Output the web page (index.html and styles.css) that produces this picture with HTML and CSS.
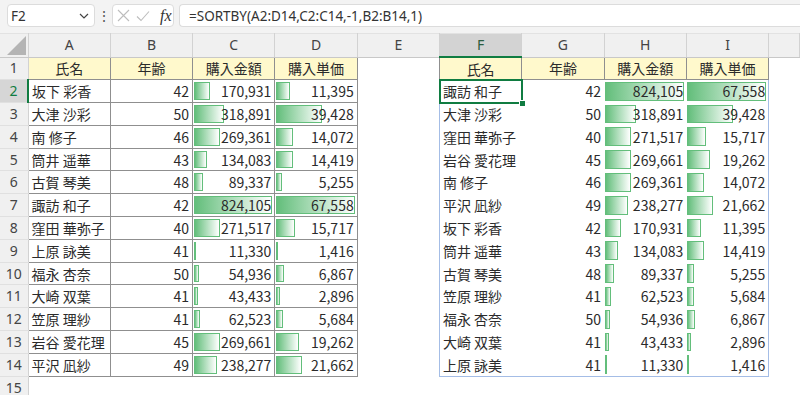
FILE: index.html
```html
<!DOCTYPE html>
<html lang="ja">

<head>
    <meta charset="UTF-8">
    <title>SORTBY</title>
    <link rel="stylesheet" href="styles.css">
</head>

<body>
    <div class="formula-bar">
        <div class="name-box">
            <span>F2</span>
            <svg class="chev" width="10" height="6" viewBox="0 0 10 6"><path d="M1 1 L5 5 L9 1" fill="none" stroke="#444" stroke-width="1.2"/></svg>
        </div>
        <div class="more">&#8942;</div>
        <div class="fx-box">
            <svg width="13" height="13" viewBox="0 0 13 13"><path d="M1 1 L12 12 M12 1 L1 12" stroke="#bdbdbd" stroke-width="1.1" fill="none"/></svg>
            <svg width="14" height="12" viewBox="0 0 14 12"><path d="M1 6.5 L5 10.5 L13 1.5" stroke="#bdbdbd" stroke-width="1.1" fill="none"/></svg>
            <span class="fx">fx</span>
        </div>
        <div class="formula">=SORTBY(A2:D14,C2:C14,-1,B2:B14,1)</div>
    </div>

    <table class="sheet">
        <colgroup>
            <col class="c-rh">
            <col class="c"><col class="c"><col class="c"><col class="c"><col class="c">
            <col class="c"><col class="c"><col class="c"><col class="c">
            <col>
        </colgroup>
        <thead>
            <tr class="col-heads">
                <th class="corner"><span class="tri"></span></th>
                <th>A</th><th>B</th><th>C</th><th>D</th><th>E</th>
                <th class="sel">F</th><th>G</th><th>H</th><th>I</th><th></th>
            </tr>
        </thead>
        <tbody>
            <tr>
                <th class="rh">1</th>
                <td class="b hd">氏名</td><td class="b hd">年齢</td><td class="b hd">購入金額</td><td class="b hd">購入単価</td>
                <td></td>
                <td class="b hd">氏名</td><td class="b hd">年齢</td><td class="b hd">購入金額</td><td class="b hd">購入単価</td>
                <td></td>
            </tr>
            <tr>
                <th class="rh sel">2</th>
                <td class="b">坂下 彩香</td><td class="b n">42</td>
                <td class="b n db"><span class="track"><span class="bar" style="width:20.7%"></span></span><span class="val">170,931</span></td>
                <td class="b n db"><span class="track"><span class="bar" style="width:16.9%"></span></span><span class="val">11,395</span></td>
                <td></td>
                <td class="sp-l active">諏訪 和子<span class="handle"></span></td><td class="n">42</td>
                <td class="n db"><span class="track"><span class="bar" style="width:100%"></span></span><span class="val">824,105</span></td>
                <td class="n db sp-r"><span class="track"><span class="bar" style="width:100%"></span></span><span class="val">67,558</span></td>
                <td></td>
            </tr>
            <tr>
                <th class="rh">3</th>
                <td class="b">大津 沙彩</td><td class="b n">50</td>
                <td class="b n db"><span class="track"><span class="bar" style="width:38.7%"></span></span><span class="val">318,891</span></td>
                <td class="b n db"><span class="track"><span class="bar" style="width:58.4%"></span></span><span class="val">39,428</span></td>
                <td></td>
                <td class="sp-l">大津 沙彩</td><td class="n">50</td>
                <td class="n db"><span class="track"><span class="bar" style="width:38.7%"></span></span><span class="val">318,891</span></td>
                <td class="n db sp-r"><span class="track"><span class="bar" style="width:58.4%"></span></span><span class="val">39,428</span></td>
                <td></td>
            </tr>
            <tr>
                <th class="rh">4</th>
                <td class="b">南 修子</td><td class="b n">46</td>
                <td class="b n db"><span class="track"><span class="bar" style="width:32.7%"></span></span><span class="val">269,361</span></td>
                <td class="b n db"><span class="track"><span class="bar" style="width:20.8%"></span></span><span class="val">14,072</span></td>
                <td></td>
                <td class="sp-l">窪田 華弥子</td><td class="n">40</td>
                <td class="n db"><span class="track"><span class="bar" style="width:32.9%"></span></span><span class="val">271,517</span></td>
                <td class="n db sp-r"><span class="track"><span class="bar" style="width:23.3%"></span></span><span class="val">15,717</span></td>
                <td></td>
            </tr>
            <tr>
                <th class="rh">5</th>
                <td class="b">筒井 遥華</td><td class="b n">43</td>
                <td class="b n db"><span class="track"><span class="bar" style="width:16.3%"></span></span><span class="val">134,083</span></td>
                <td class="b n db"><span class="track"><span class="bar" style="width:21.3%"></span></span><span class="val">14,419</span></td>
                <td></td>
                <td class="sp-l">岩谷 愛花理</td><td class="n">45</td>
                <td class="n db"><span class="track"><span class="bar" style="width:32.7%"></span></span><span class="val">269,661</span></td>
                <td class="n db sp-r"><span class="track"><span class="bar" style="width:28.5%"></span></span><span class="val">19,262</span></td>
                <td></td>
            </tr>
            <tr>
                <th class="rh">6</th>
                <td class="b">古賀 琴美</td><td class="b n">48</td>
                <td class="b n db"><span class="track"><span class="bar" style="width:10.8%"></span></span><span class="val">89,337</span></td>
                <td class="b n db"><span class="track"><span class="bar" style="width:7.8%"></span></span><span class="val">5,255</span></td>
                <td></td>
                <td class="sp-l">南 修子</td><td class="n">46</td>
                <td class="n db"><span class="track"><span class="bar" style="width:32.7%"></span></span><span class="val">269,361</span></td>
                <td class="n db sp-r"><span class="track"><span class="bar" style="width:20.8%"></span></span><span class="val">14,072</span></td>
                <td></td>
            </tr>
            <tr>
                <th class="rh">7</th>
                <td class="b">諏訪 和子</td><td class="b n">42</td>
                <td class="b n db"><span class="track"><span class="bar" style="width:100%"></span></span><span class="val">824,105</span></td>
                <td class="b n db"><span class="track"><span class="bar" style="width:100%"></span></span><span class="val">67,558</span></td>
                <td></td>
                <td class="sp-l">平沢 凪紗</td><td class="n">49</td>
                <td class="n db"><span class="track"><span class="bar" style="width:28.9%"></span></span><span class="val">238,277</span></td>
                <td class="n db sp-r"><span class="track"><span class="bar" style="width:32.1%"></span></span><span class="val">21,662</span></td>
                <td></td>
            </tr>
            <tr>
                <th class="rh">8</th>
                <td class="b">窪田 華弥子</td><td class="b n">40</td>
                <td class="b n db"><span class="track"><span class="bar" style="width:32.9%"></span></span><span class="val">271,517</span></td>
                <td class="b n db"><span class="track"><span class="bar" style="width:23.3%"></span></span><span class="val">15,717</span></td>
                <td></td>
                <td class="sp-l">坂下 彩香</td><td class="n">42</td>
                <td class="n db"><span class="track"><span class="bar" style="width:20.7%"></span></span><span class="val">170,931</span></td>
                <td class="n db sp-r"><span class="track"><span class="bar" style="width:16.9%"></span></span><span class="val">11,395</span></td>
                <td></td>
            </tr>
            <tr>
                <th class="rh">9</th>
                <td class="b">上原 詠美</td><td class="b n">41</td>
                <td class="b n db"><span class="track"><span class="bar" style="width:1.4%"></span></span><span class="val">11,330</span></td>
                <td class="b n db"><span class="track"><span class="bar" style="width:2.1%"></span></span><span class="val">1,416</span></td>
                <td></td>
                <td class="sp-l">筒井 遥華</td><td class="n">43</td>
                <td class="n db"><span class="track"><span class="bar" style="width:16.3%"></span></span><span class="val">134,083</span></td>
                <td class="n db sp-r"><span class="track"><span class="bar" style="width:21.3%"></span></span><span class="val">14,419</span></td>
                <td></td>
            </tr>
            <tr>
                <th class="rh">10</th>
                <td class="b">福永 杏奈</td><td class="b n">50</td>
                <td class="b n db"><span class="track"><span class="bar" style="width:6.7%"></span></span><span class="val">54,936</span></td>
                <td class="b n db"><span class="track"><span class="bar" style="width:10.2%"></span></span><span class="val">6,867</span></td>
                <td></td>
                <td class="sp-l">古賀 琴美</td><td class="n">48</td>
                <td class="n db"><span class="track"><span class="bar" style="width:10.8%"></span></span><span class="val">89,337</span></td>
                <td class="n db sp-r"><span class="track"><span class="bar" style="width:7.8%"></span></span><span class="val">5,255</span></td>
                <td></td>
            </tr>
            <tr>
                <th class="rh">11</th>
                <td class="b">大崎 双葉</td><td class="b n">41</td>
                <td class="b n db"><span class="track"><span class="bar" style="width:5.3%"></span></span><span class="val">43,433</span></td>
                <td class="b n db"><span class="track"><span class="bar" style="width:4.3%"></span></span><span class="val">2,896</span></td>
                <td></td>
                <td class="sp-l">笠原 理紗</td><td class="n">41</td>
                <td class="n db"><span class="track"><span class="bar" style="width:7.6%"></span></span><span class="val">62,523</span></td>
                <td class="n db sp-r"><span class="track"><span class="bar" style="width:8.4%"></span></span><span class="val">5,684</span></td>
                <td></td>
            </tr>
            <tr>
                <th class="rh">12</th>
                <td class="b">笠原 理紗</td><td class="b n">41</td>
                <td class="b n db"><span class="track"><span class="bar" style="width:7.6%"></span></span><span class="val">62,523</span></td>
                <td class="b n db"><span class="track"><span class="bar" style="width:8.4%"></span></span><span class="val">5,684</span></td>
                <td></td>
                <td class="sp-l">福永 杏奈</td><td class="n">50</td>
                <td class="n db"><span class="track"><span class="bar" style="width:6.7%"></span></span><span class="val">54,936</span></td>
                <td class="n db sp-r"><span class="track"><span class="bar" style="width:10.2%"></span></span><span class="val">6,867</span></td>
                <td></td>
            </tr>
            <tr>
                <th class="rh">13</th>
                <td class="b">岩谷 愛花理</td><td class="b n">45</td>
                <td class="b n db"><span class="track"><span class="bar" style="width:32.7%"></span></span><span class="val">269,661</span></td>
                <td class="b n db"><span class="track"><span class="bar" style="width:28.5%"></span></span><span class="val">19,262</span></td>
                <td></td>
                <td class="sp-l">大崎 双葉</td><td class="n">41</td>
                <td class="n db"><span class="track"><span class="bar" style="width:5.3%"></span></span><span class="val">43,433</span></td>
                <td class="n db sp-r"><span class="track"><span class="bar" style="width:4.3%"></span></span><span class="val">2,896</span></td>
                <td></td>
            </tr>
            <tr>
                <th class="rh">14</th>
                <td class="b">平沢 凪紗</td><td class="b n">49</td>
                <td class="b n db"><span class="track"><span class="bar" style="width:28.9%"></span></span><span class="val">238,277</span></td>
                <td class="b n db"><span class="track"><span class="bar" style="width:32.1%"></span></span><span class="val">21,662</span></td>
                <td></td>
                <td class="sp-l sp-b">上原 詠美</td><td class="n sp-b">41</td>
                <td class="n db sp-b"><span class="track"><span class="bar" style="width:1.4%"></span></span><span class="val">11,330</span></td>
                <td class="n db sp-r sp-b"><span class="track"><span class="bar" style="width:2.1%"></span></span><span class="val">1,416</span></td>
                <td></td>
            </tr>
            <tr>
                <th class="rh">15</th>
                <td></td><td></td><td></td><td></td><td></td><td></td><td></td><td></td><td></td><td></td>
            </tr>
        </tbody>
    </table>
</body>

</html>
```

FILE: styles.css
```css
body {
    margin: 0;
    width: 800px;
    height: 395px;
    overflow: hidden;
    background-color: #ffffff;
    font-family: "Noto Sans CJK JP", sans-serif;
    color: #2b2b2b;
}

/* formula bar */

.formula-bar {
    display: flex;
    align-items: flex-start;
    height: 33px;
    padding: 4px 0 0 7px;
    box-sizing: border-box;
    background-color: #f3f3f3;
    font-family: "Noto Sans", sans-serif;
    font-size: 13.5px;
}

.name-box,
.fx-box,
.formula {
    height: 23px;
    box-sizing: border-box;
    background-color: #fff;
    border: 1px solid #dcdcdc;
    border-radius: 4px;
    display: flex;
    align-items: center;
}

.name-box {
    width: 88px;
    justify-content: space-between;
    padding: 0 5px 0 3px;
    color: #333;
}

.more {
    width: 17px;
    height: 23px;
    line-height: 23px;
    text-align: center;
    color: #555;
    font-size: 14px;
}

.fx-box {
    width: 62px;
    padding-left: 4px;
    gap: 6px;
}

.fx {
    font-family: "Liberation Serif", serif;
    font-style: italic;
    font-size: 16px;
    color: #333;
    margin-left: 4px;
}

.formula {
    flex: 1;
    margin-left: 5px;
    padding-left: 9px;
    border-right: none;
    border-radius: 4px 0 0 4px;
    color: #333;
}

/* sheet grid */

.sheet {
    width: 800px;
    table-layout: fixed;
    border-collapse: collapse;
    font-size: 14px;
}

.c-rh {
    width: 28px;
}

.c {
    width: 82.3px;
}

.col-heads th {
    height: 22px;
    padding: 0;
    background-color: #f0f0f0;
    border-top: 1px solid #e2e2e2;
    border-right: 1px solid #d2d2d2;
    border-bottom: 1px solid #c8c8c8;
    font-family: "Noto Sans", sans-serif;
    font-weight: normal;
    line-height: 18px;
    color: #444;
    text-align: center;
}

.col-heads th.sel {
    background-color: #d3d3d3;
    border-bottom: 2px solid #107c41;
    color: #2b5d3f;
}

.corner {
    position: relative;
}

.tri {
    position: absolute;
    right: 2px;
    bottom: 2px;
    width: 0;
    height: 0;
    border-left: 19px solid transparent;
    border-bottom: 19px solid #b4b4b4;
}

.sheet tbody tr {
    height: 22.8px;
}

.sheet tbody th,
.sheet tbody td {
    line-height: 18px;
}

.rh {
    padding: 0;
    background-color: #f0f0f0;
    border-right: 1px solid #d2d2d2;
    border-bottom: 1px solid #e0e0e0;
    font-family: "Noto Sans", sans-serif;
    font-weight: normal;
    color: #444;
    text-align: center;
}

.rh.sel {
    background-color: #d6d6d6;
    border-right: 2px solid #107c41;
    color: #107c41;
}

.sheet td {
    padding: 0 3px;
    white-space: nowrap;
    overflow: hidden;
    vertical-align: middle;
}

.sheet td.b {
    border: 1px solid #8f8f8f;
}

.sheet td.hd {
    background-color: #fff9cc;
    text-align: center;
}

.sheet td.n {
    text-align: right;
}

/* spill range outline */

.sheet td.sp-l {
    border-left: 1px solid #a4bde6;
}

.sheet td.sp-r {
    border-right: 1px solid #a4bde6;
}

.sheet td.sp-b {
    border-bottom: 1px solid #a4bde6;
}

/* data bars */

.db {
    position: relative;
}

.track {
    position: absolute;
    left: 1px;
    right: 2px;
    top: 2px;
    bottom: 2px;
}

.bar {
    display: block;
    height: 100%;
    box-sizing: border-box;
    border: 1px solid #63be7b;
    background: linear-gradient(to right, #63be7b, #ffffff);
}

.val {
    position: relative;
}

/* active cell */

.active {
    position: relative;
    overflow: visible !important;
}

.active::after {
    content: "";
    position: absolute;
    left: -1px;
    top: -1px;
    right: -1px;
    bottom: -1px;
    border: 2px solid #107c41;
}

.handle {
    position: absolute;
    right: -4px;
    bottom: -4px;
    width: 5px;
    height: 5px;
    background-color: #107c41;
    border: 1px solid #fff;
    z-index: 1;
}
```
